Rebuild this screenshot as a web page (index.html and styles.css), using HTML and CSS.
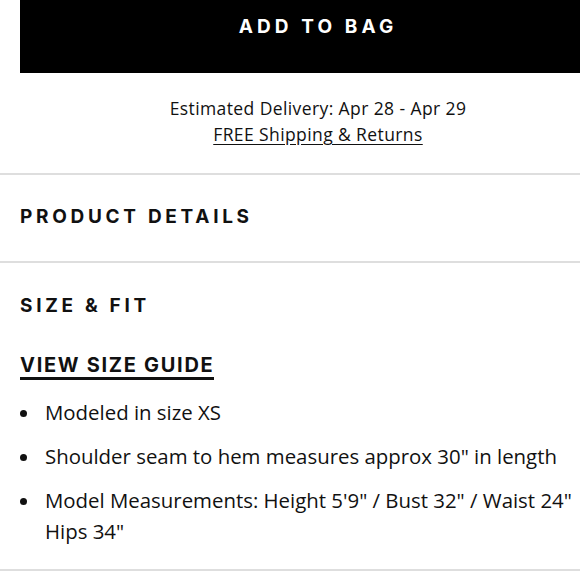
FILE: index.html
```html
<!DOCTYPE html>
<html>
<head>
<meta charset="utf-8">
<link rel="stylesheet" href="styles.css">
</head>
<body>
<div class="page">
  <div class="buy">
    <button class="add-btn">ADD TO BAG</button>
    <div class="delivery">
      <p class="eta">Estimated Delivery: Apr 28 - Apr 29</p>
      <a class="ship" href="#">FREE Shipping &amp; Returns</a>
    </div>
  </div>
  <section class="panel details">
    <h2 class="panel-title">PRODUCT DETAILS</h2>
  </section>
  <section class="panel fit">
    <h2 class="panel-title">SIZE &amp; FIT</h2>
    <a class="guide" href="#">VIEW SIZE GUIDE</a>
    <ul class="facts">
      <li><span class="dot"></span><span class="fact-text">Modeled in size XS</span></li>
      <li><span class="dot"></span><span class="fact-text">Shoulder seam to hem measures approx 30" in length</span></li>
      <li><span class="dot"></span><span class="fact-text">Model Measurements: Height 5'9" / Bust 32" / Waist 24" Hips 34"</span></li>
    </ul>
  </section>
</div>
</body>
</html>
```
FILE: styles.css
```css
html, body {
  margin: 0;
  padding: 0;
  background: #fff;
  overflow: hidden;
}
.page {
  width: 580px;
  color: #111;
  font-family: "Open Sans", "Noto Sans", sans-serif;
}
.buy {
  padding-left: 20px;
}
.add-btn {
  display: block;
  width: 596px;
  height: 73px;
  margin: 0;
  border: 0;
  background: #000;
  color: #fff;
  font-family: "Inter", "Liberation Sans", sans-serif;
  font-weight: 700;
  font-size: 19px;
  letter-spacing: 4.1px;
  padding: 0 0 20px;
  line-height: 33px;
}
.delivery {
  width: 596px;
  display: flex;
  flex-direction: column;
  align-items: center;
  padding: 22px 0 26px;
  font-size: 17.5px;
  letter-spacing: 0.4px;
  line-height: 26px;
}
.eta {
  margin: 0;
}
.ship {
  color: #111;
  text-decoration: underline;
  text-underline-offset: 3px;
}
.panel {
  border-top: 2px solid #dedede;
  padding-left: 20px;
}
.details {
  display: flex;
  align-items: center;
  padding-bottom: 2px;
  box-sizing: border-box;
  height: 88px;
}
.panel-title {
  margin: 0;
  font-family: "Inter", "Liberation Sans", sans-serif;
  font-weight: 700;
  font-size: 19px;
  letter-spacing: 3.7px;
  line-height: 24px;
}
.fit {
  padding-top: 31px;
  border-bottom: 2px solid #dedede;
  padding-bottom: 22px;
}
.guide {
  display: inline-block;
  margin-top: 35px;
  font-family: "Inter", "Liberation Sans", sans-serif;
  font-weight: 700;
  font-size: 20px;
  letter-spacing: 1.7px;
  color: #111;
  text-decoration: none;
  border-bottom: 3px solid #111;
  line-height: 24px;
  padding-bottom: 0;
}
.facts {
  margin: 17px 0 0;
  padding: 0;
  list-style: none;
  font-size: 20.4px;
  line-height: 31px;
}
.facts li {
  display: flex;
  align-items: flex-start;
  margin-bottom: 13px;
}
.facts li:last-child {
  margin-bottom: 0;
}
.dot {
  flex: none;
  width: 7px;
  height: 7px;
  border-radius: 50%;
  background: #111;
  margin: 13px 18px 0 0;
}
.fact-text {
  max-width: 540px;
}
```
